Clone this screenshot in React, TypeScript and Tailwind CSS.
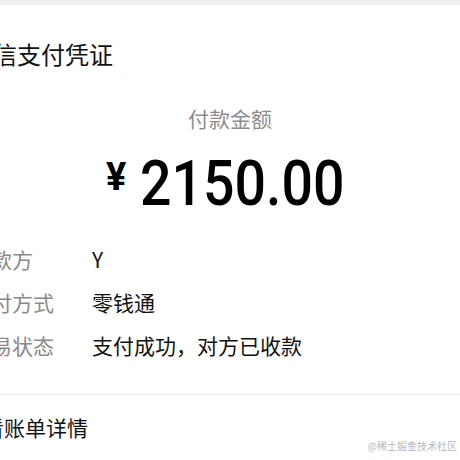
import React from "react";

const cjk = { fontFamily: '"Noto Sans CJK SC", "Noto Sans", sans-serif' };

function Row({ label, value }: { label: string; value: string }) {
  return (
    <div className="flex h-[43px] items-center ml-[-30px]">
      <div className="w-[122px] shrink-0 text-[21px] leading-none text-[#8a8a8a]">{label}</div>
      <div className="text-[21px] leading-none text-[#111111]">{value}</div>
    </div>
  );
}

export default function App() {
  return (
    <div className="relative h-[460px] w-[460px] overflow-hidden bg-white" style={cjk}>
      <div className="h-[5px] bg-[#ededed]" />
      <div className="flex h-[98px] items-center ml-[-31px] text-[24px] leading-none text-[#111111] whitespace-nowrap">
        微信支付凭证
      </div>
      <div className="flex h-[30px] items-center justify-center text-[21px] leading-none text-[#8c8c8c]">
        付款金额
      </div>
      <div className="flex h-[98px] items-start pl-[106px]">
        <span
          className="mt-[25px] text-[38px] font-bold leading-none text-black"
          style={{ fontFamily: 'Roboto, "Liberation Sans", sans-serif' }}
        >
          ¥
        </span>
        <span
          className="mt-[19px] ml-[14px] origin-left scale-x-[0.88] text-[63px] font-medium leading-none text-black whitespace-nowrap"
          style={{ fontFamily: 'Roboto, "Liberation Sans", sans-serif' }}
        >
          2150.00
        </span>
      </div>
      <div className="h-[7px]" />
      <Row label="付款方" value="Y" />
      <Row label="支付方式" value="零钱通" />
      <Row label="交易状态" value="支付成功，对方已收款" />
      <div className="h-[27px]" />
      <div className="h-px bg-[#eeeeee]" />
      <div className="flex h-[64px] items-center ml-[-38px] text-[21px] leading-none text-[#111111] whitespace-nowrap">
        查看账单详情
      </div>
      <div className="absolute bottom-[9px] right-[3px] text-[10px] leading-none text-[#b8b8b8] whitespace-nowrap">
        @稀土掘金技术社区
      </div>
    </div>
  );
}
